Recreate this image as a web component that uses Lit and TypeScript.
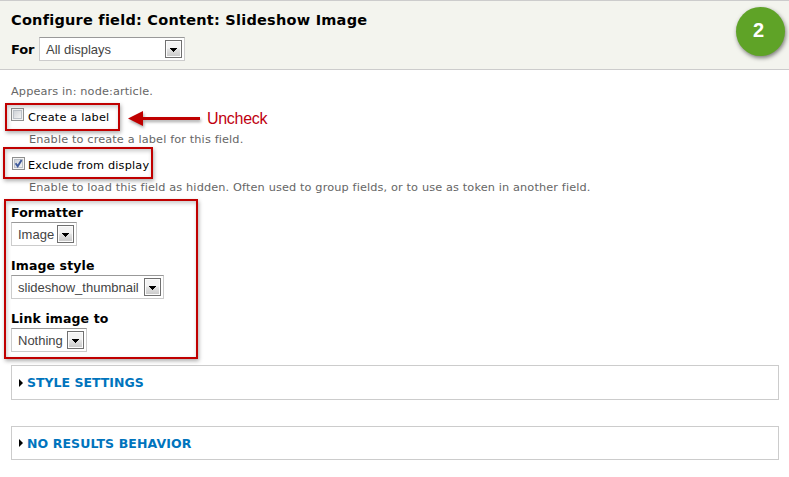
import { LitElement, html, css, svg } from "lit";
import { customElement, property } from "lit/decorators.js";

@customElement("select-box")
class SelectBox extends LitElement {
  @property() value = "";
  static styles = css`
    :host {
      display: flex;
      justify-content: space-between;
      box-sizing: border-box;
      height: 24px;
      padding: 2px 2px 2px 6px;
      border: 1px solid #ccc;
      border-top-color: #999;
      background: #fff;
      color: #444;
      font: 13px/20px "Liberation Sans", sans-serif;
      white-space: nowrap;
    }
    svg { display: block; flex: none; }
  `;
  render() {
    return html`<span>${this.value}</span>
      <svg width="17" height="18" viewBox="0 0 17 18" shape-rendering="crispEdges">
        <defs>
          <linearGradient id="g" x2="0" y2="1">
            <stop offset="0.45" stop-color="#f3f3f3" />
            <stop offset="0.5" stop-color="#e4e4e4" />
            <stop offset="1" stop-color="#cbcbcb" />
          </linearGradient>
        </defs>
        <rect width="17" height="18" fill="#707070" />
        <rect x="1" y="1" width="15" height="16" fill="#fcfcfc" />
        <rect x="2" y="2" width="13" height="14" fill="url(#g)" />
        <path d="M5 8h7v1h-1v1h-1v1h-1v1h-1v-1h-1v-1h-1v-1h-1z" fill="#000" />
      </svg>`;
  }
}

@customElement("check-mark")
class CheckMark extends LitElement {
  @property({ type: Boolean }) checked = false;
  static styles = css`
    :host { display: block; width: 13px; height: 13px; }
    svg { display: block; }
  `;
  render() {
    return html`<svg width="13" height="13" viewBox="0 0 13 13">
      <defs>
        <linearGradient id="c" x2="1" y2="1">
          <stop offset="0" stop-color="#cdd0d5" />
          <stop offset="1" stop-color="#f6f6f6" />
        </linearGradient>
      </defs>
      <rect x=".5" y=".5" width="12" height="12" fill="#f4f4f4" stroke="#8e8f8f" />
      <rect x="2.5" y="2.5" width="8" height="8" fill="url(#c)" stroke="#bcc1c8" />
      ${this.checked
        ? svg`<path d="M3.6 6.3L5.7 9.3L9.6 3" fill="none" stroke="#3f5a9c" stroke-width="1.9" />`
        : ""}
    </svg>`;
  }
}

@customElement("app-root")
class AppRoot extends LitElement {
  static styles = css`
    :host {
      display: block;
      position: relative;
      height: 477px;
      overflow: hidden;
      background: #fff;
      color: #000;
      font: 11.3px/16px "DejaVu Sans", sans-serif;
      white-space: nowrap;
    }
    .header {
      box-sizing: border-box;
      height: 70px;
      padding: 9px 11px 0;
      border: solid #ccc;
      border-width: 1px 0;
      background: #f3f4ee;
    }
    .title { font-size: 14.5px; line-height: 20px; font-weight: 700; letter-spacing: 0.24px; }
    .for { display: flex; gap: 5px; margin-top: 7px; }
    .for b { width: 23px; font-size: 13px; line-height: 26px; height: 24px; letter-spacing: -0.2px; }
    .displays { width: 146px; }
    .content { padding: 14px 10px 0 11px; }
    .hint { color: #666; letter-spacing: 0.13px; }
    .indent { margin-left: 18px; }
    .check { display: flex; height: 16px; margin-top: 8px; }
    .check span { margin: 2px 0 0 4px; letter-spacing: 0.17px; }
    .check + .hint { margin-top: 8px; }
    .second { padding-left: 1px; margin-top: 9px; }
    .second span { margin: 1px 0 0 3px; }
    .second + .hint { margin-top: 7px; }
    .fields { display: flex; flex-direction: column; align-items: flex-start; gap: 9px; margin-top: 6px; }
    .field b { display: block; font-size: 12.5px; line-height: 22px; height: 20px; letter-spacing: 0.12px; }
    .field { display: flex; flex-direction: column; }
    .image { width: 66px; }
    .style { width: 153px; }
    .link { width: 76px; }
    .panel {
      display: flex;
      align-items: center;
      box-sizing: border-box;
      height: 35px;
      margin-top: 13px;
      padding-left: 7px;
      border: 1px solid #ccc;
      color: #0074bd;
      font: 700 12.5px/16px "DejaVu Sans", sans-serif;
    }
    .panel + .panel { height: 34px; margin-top: 26px; }
    .panel svg { margin-right: 4px; }
    .panel span { padding-top: 1px; }
    .panel + .panel span { padding-top: 2px; letter-spacing: 0.1px; }
    .mark {
      position: absolute;
      box-sizing: border-box;
      border: 2px solid #c00000;
      box-shadow: 1px 2px 4px rgba(0, 0, 0, 0.32), inset 1px 2px 4px rgba(0, 0, 0, 0.22);
    }
    .m1 { left: 5px; top: 103px; width: 115px; height: 28px; }
    .m2 { left: 3px; top: 147px; width: 150px; height: 32px; }
    .m3 { left: 4px; top: 199px; width: 194px; height: 160px; }
    .arrow { position: absolute; left: 124px; top: 106px; filter: drop-shadow(1px 2px 1.5px rgba(0, 0, 0, 0.35)); }
    .callout {
      position: absolute;
      left: 207px;
      top: 109px;
      color: #c00010;
      font: 16px/20px "Liberation Sans", sans-serif;
      letter-spacing: -0.3px;
    }
    .step {
      position: absolute;
      left: 736px;
      top: 7px;
      width: 49px;
      height: 49px;
      border-radius: 50%;
      background: #5fa327;
      box-shadow: 1px 2px 4px rgba(0, 0, 0, 0.5);
      color: #fff;
      font: bold 20px/47px "Liberation Sans", sans-serif;
      text-align: center;
      text-indent: -4px;
    }
  `;
  panel(name: string, cls: string) {
    return html`<div class="panel ${cls}">
      <svg width="4" height="8" viewBox="0 0 4 8"><path d="M0 0L4 4L0 8z" /></svg><span>${name}</span>
    </div>`;
  }
  render() {
    return html`
      <div class="header">
        <div class="title">Configure field: Content: Slideshow Image</div>
        <div class="for"><b>For</b><select-box class="displays" value="All displays"></select-box></div>
      </div>
      <div class="content">
        <div class="hint appears">Appears in: node:article.</div>
        <div class="check first"><check-mark></check-mark><span>Create a label</span></div>
        <div class="hint indent">Enable to create a label for this field.</div>
        <div class="check second"><check-mark checked></check-mark><span>Exclude from display</span></div>
        <div class="hint indent long">Enable to load this field as hidden. Often used to group fields, or to use as token in another field.</div>
        <div class="fields">
          <div class="field"><b>Formatter</b><select-box class="image" value="Image"></select-box></div>
          <div class="field"><b>Image style</b><select-box class="style" value="slideshow_thumbnail"></select-box></div>
          <div class="field"><b>Link image to</b><select-box class="link" value="Nothing"></select-box></div>
        </div>
        ${this.panel("STYLE SETTINGS", "p1")} ${this.panel("NO RESULTS BEHAVIOR", "p2")}
      </div>
      <div class="mark m1"></div>
      <div class="mark m2"></div>
      <div class="mark m3"></div>
      <svg class="arrow" width="80" height="26" viewBox="0 0 80 26">
        <path d="M4 12.5L19 5V11H76V14H19V20z" fill="#c00000" />
      </svg>
      <div class="callout">Uncheck</div>
      <div class="step">2</div>
    `;
  }
}
